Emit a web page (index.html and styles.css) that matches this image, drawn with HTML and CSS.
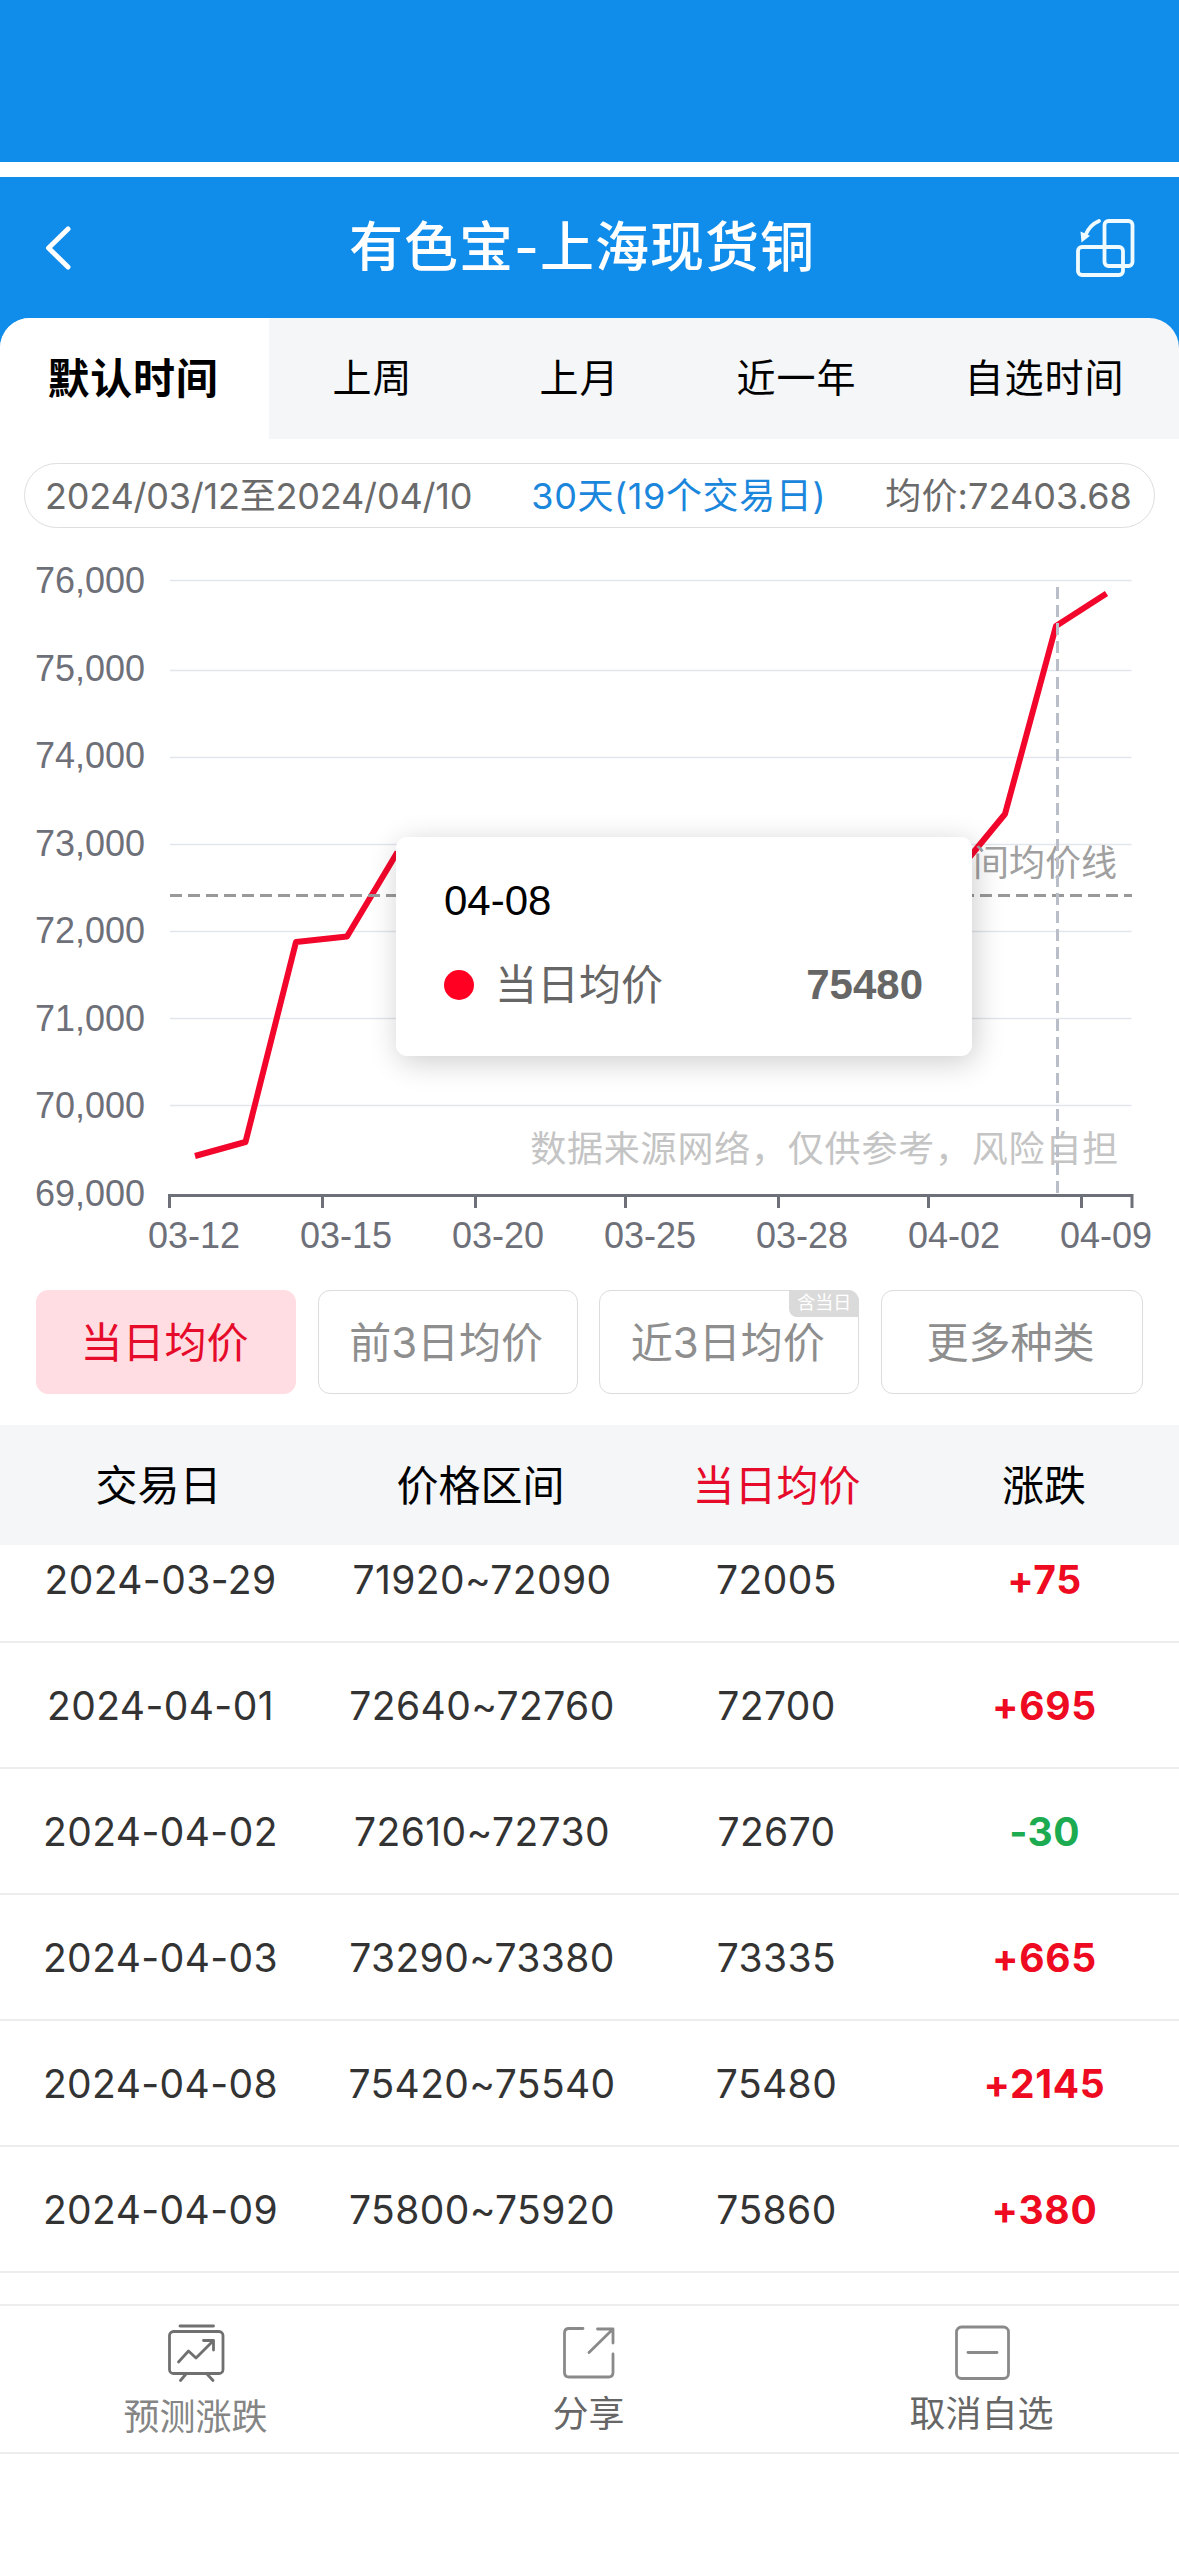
FILE: index.html
```html
<!DOCTYPE html>
<html lang="zh-CN">
<head>
  <meta charset="UTF-8">
  <title>有色宝-上海现货铜</title>
  <link rel="stylesheet" href="styles.css">
</head>
<body>

<div class="status-bar"></div>

<div class="top">
  <header class="navbar">
    <svg class="icon-back" viewBox="0 0 30 50" width="30" height="50">
      <path d="M25 6 L5.500 25 L25 44"/>
    </svg>
    <h1>有色宝-上海现货铜</h1>
    <svg class="icon-rotate" viewBox="0 0 60 60" width="60" height="60">
      <rect x="29.500" y="4" width="28" height="45" rx="4"/>
      <rect x="3" y="30" width="45" height="28" rx="4"/>
      <path d="M24 4 C18 6.500 13 12 10.500 18"/>
      <path class="head" d="M5.500 14.500 L15 18.800 L6.500 25.500 Z"/>
    </svg>
  </header>

  <nav class="tabs">
    <div class="tab active">默认时间</div>
    <div class="tab">上周</div>
    <div class="tab">上月</div>
    <div class="tab">近一年</div>
    <div class="tab">自选时间</div>
  </nav>
</div>

<div class="summary">
  <span class="range">2024/03/12至2024/04/10</span>
  <span class="days">30天(19个交易日)</span>
  <span class="avg">均价:72403.68</span>
</div>

<!-- 走势图 -->
<div class="chart">
  <svg viewBox="0 528 1179 742" width="1179" height="742">
    <g class="grid">
      <path d="M170 580.500H1131.500M170 670.500H1131.500M170 757.500H1131.500M170 844.500H1131.500M170 931.500H1131.500M170 1018.500H1131.500M170 1105.500H1131.500"/>
    </g>
    <g class="axis">
      <path d="M168 1195.500H1133M169.500 1194V1208M322.500 1194V1208M475.500 1194V1208M625.500 1194V1208M778.500 1194V1208M928.500 1194V1208M1081.500 1194V1208M1132 1194V1208"/>
    </g>
    <g class="label-y">
      <text x="145" y="593">76,000</text>
      <text x="145" y="681">75,000</text>
      <text x="145" y="768">74,000</text>
      <text x="145" y="856">73,000</text>
      <text x="145" y="943">72,000</text>
      <text x="145" y="1031">71,000</text>
      <text x="145" y="1118">70,000</text>
      <text x="145" y="1206">69,000</text>
    </g>
    <g class="label-x">
      <text x="194" y="1248">03-12</text>
      <text x="346" y="1248">03-15</text>
      <text x="498" y="1248">03-20</text>
      <text x="650" y="1248">03-25</text>
      <text x="802" y="1248">03-28</text>
      <text x="954" y="1248">04-02</text>
      <text x="1106" y="1248">04-09</text>
    </g>
    <polyline class="line" points="195,1156 245.500,1142 296,942 347,936.500 397.500,852"/>
    <polyline class="line" points="954,876 1005,814 1056,626 1106.500,593.500"/>
    <path class="avg-line" d="M170 895.500H1132"/>
    <text class="avg-text" x="1117" y="876">间均价线</text>
    <text class="source" x="1119" y="1162">数据来源网络，仅供参考，风险自担</text>
    <path class="pointer" d="M1057.500 587V1193"/>
  </svg>

  <div class="tooltip">
    <div class="tip-date">04-08</div>
    <div class="tip-row">
      <i class="dot"></i>
      <span>当日均价</span>
      <b>75480</b>
    </div>
  </div>
</div>

<div class="types">
  <div class="type active">当日均价</div>
  <div class="type">前3日均价</div>
  <div class="type">近3日均价<span class="badge">含当日</span></div>
  <div class="type">更多种类</div>
</div>

<!-- 价格列表 -->
<div class="row table-head">
  <div>交易日</div>
  <div>价格区间</div>
  <div class="current">当日均价</div>
  <div>涨跌</div>
</div>
<div class="table-body">
  <div class="row"><div>2024-03-29</div><div>71920~72090</div><div>72005</div><div class="up">+75</div></div>
  <div class="row"><div>2024-04-01</div><div>72640~72760</div><div>72700</div><div class="up">+695</div></div>
  <div class="row"><div>2024-04-02</div><div>72610~72730</div><div>72670</div><div class="down">-30</div></div>
  <div class="row"><div>2024-04-03</div><div>73290~73380</div><div>73335</div><div class="up">+665</div></div>
  <div class="row"><div>2024-04-08</div><div>75420~75540</div><div>75480</div><div class="up">+2145</div></div>
  <div class="row"><div>2024-04-09</div><div>75800~75920</div><div>75860</div><div class="up">+380</div></div>
</div>

<footer class="toolbar">
  <div class="tool forecast">
    <svg viewBox="0 0 60 60" width="60" height="60">
      <path d="M14 4H47.500"/>
      <rect x="3.500" y="9.500" width="53.500" height="42" rx="4"/>
      <path d="M20 52L14.500 58.500M41 52L47 58.500"/>
      <path d="M12.500 40L22.500 29L30 36L47 19M37.500 18.500H47.500V28"/>
    </svg>
    <span>预测涨跌</span>
  </div>
  <div class="tool share">
    <svg viewBox="0 0 60 60" width="60" height="60">
      <path d="M24 6.500H10Q5.500 6.500 5.500 11V50.500Q5.500 55 10 55H49.500Q54 55 54 50.500V32"/>
      <path d="M30 30.500L53.500 7.500M38.500 7H54V21"/>
    </svg>
    <span>分享</span>
  </div>
  <div class="tool remove">
    <svg viewBox="0 0 60 60" width="60" height="60">
      <rect x="4.500" y="5" width="52" height="51.500" rx="5"/>
      <path d="M16 30.500H45"/>
    </svg>
    <span>取消自选</span>
  </div>
</footer>

</body>
</html>
```
FILE: styles.css
```css
* {
  box-sizing: border-box;
}
body {
  margin: 0;
  background: #fff;
  color: #000;
  font-family: Inter, "Noto Sans CJK SC", sans-serif;
}
svg {
  display: block;
  fill: none;
}

/* 顶部 */
.status-bar {
  height: 162px;
  background: #108cea;
}
.top {
  margin-top: 15px;
  background: #108cea;
}
.navbar {
  display: flex;
  align-items: center;
  justify-content: space-between;
  height: 141px;
  padding: 0 44px 0 43px;
}
.navbar h1 {
  margin: 0 0 0 16px;
  color: #fff;
  font-size: 54px;
  font-weight: 500;
  letter-spacing: 1px;
  line-height: 80px;
}
.icon-back {
  stroke: #fff;
  stroke-width: 5;
  stroke-linecap: round;
  stroke-linejoin: round;
}
.icon-rotate {
  margin-bottom: 2px;
  stroke: #f0fbff;
  stroke-width: 3.800;
  stroke-linecap: round;
}
.icon-rotate .head {
  fill: #f0fbff;
  stroke: none;
}

/* 时间切换 */
.tabs {
  display: grid;
  grid-template-columns: 269px 207px 207px 227px 269px;
  height: 121px;
  border-radius: 30px 30px 0 0;
  overflow: hidden;
  background: #f4f6f8;
}
.tab {
  display: flex;
  align-items: center;
  justify-content: center;
  padding-bottom: 7px;
  font-size: 39px;
  letter-spacing: 1px;
}
.tab.active {
  padding-right: 3px;
  background: #fff;
  font-size: 42px;
  font-weight: 700;
  letter-spacing: 0.7px;
}

.summary {
  display: flex;
  align-items: center;
  justify-content: space-between;
  height: 65px;
  margin: 24px 24px 0;
  padding: 0 22px 5px 20px;
  border: 1px solid #dedede;
  border-radius: 33px;
  color: #6a6a6a;
  font-size: 36px;
  white-space: nowrap;
}
.summary .range {
  letter-spacing: -0.2px;
}
.summary .days {
  color: #1a86dc;
  letter-spacing: 0.6px;
}
.summary .avg {
  letter-spacing: 0.1px;
}

/* 图表 */
.chart {
  position: relative;
  height: 742px;
}
.grid {
  stroke: #e3e5ec;
  stroke-width: 1.500;
}
.axis {
  stroke: #6e7079;
  stroke-width: 3;
}
.label-y,
.label-x {
  fill: #6e7079;
  font: 36px "Liberation Sans", sans-serif;
}
.label-y {
  text-anchor: end;
}
.label-x {
  text-anchor: middle;
}
.line {
  stroke: #f3062b;
  stroke-width: 6;
  stroke-linejoin: round;
}
.avg-line {
  stroke: #999;
  stroke-width: 3;
  stroke-dasharray: 12 6;
}
.avg-text,
.source {
  font-family: "Noto Sans CJK SC", sans-serif;
  font-size: 36px;
  text-anchor: end;
}
.avg-text {
  fill: #a0a0a0;
}
.source {
  fill: #c4c4c4;
  letter-spacing: 0.8px;
}
.pointer {
  stroke: #b9bec9;
  stroke-width: 3;
  stroke-dasharray: 12 6;
}
.tooltip {
  position: absolute;
  left: 396px;
  top: 309px;
  width: 576px;
  height: 219px;
  padding: 40px 49px 0 48px;
  border-radius: 11px;
  background: #fff;
  box-shadow: 3px 6px 30px rgba(0, 0, 0, 0.2);
  font-family: "Liberation Sans", "Noto Sans CJK SC", sans-serif;
  font-size: 42px;
}
.tip-date {
  line-height: 48px;
}
.tip-row {
  display: flex;
  align-items: center;
  height: 60px;
  margin-top: 30px;
  color: #666;
}
.tip-row span {
  padding-bottom: 7px;
}
.tip-row b {
  margin-left: auto;
}
.dot {
  width: 30px;
  height: 30px;
  margin-right: 21px;
  border-radius: 50%;
  background: #ff0022;
}

/* 均价类型 */
.types {
  display: grid;
  grid-template-columns: 260px 260px 260px 262px;
  justify-content: space-between;
  height: 155px;
  padding: 20px 36px 31px;
}
.type {
  position: relative;
  display: flex;
  align-items: center;
  justify-content: center;
  padding: 0 3px 5px 0;
  border: 1px solid #dcdcdc;
  border-radius: 12px;
  color: #8e8e8e;
  font-size: 42px;
}
.type.active {
  border-color: #ffdde2;
  background: #ffdde2;
  color: #e60b2a;
}
.badge {
  position: absolute;
  top: -1px;
  right: -1px;
  width: 70px;
  height: 27px;
  border-radius: 0 11px 0 8px;
  background: #dadada;
  color: #fff;
  font-size: 18px;
  line-height: 26px;
  text-align: center;
}

/* 列表 */
.row {
  display: grid;
  grid-template-columns: 321px 322px 267px 269px;
  align-items: center;
  height: 126px;
  border-bottom: 2px solid #ededed;
  color: #333;
  font-size: 39px;
  letter-spacing: 0.4px;
  text-align: center;
}
.row.table-head {
  grid-template-columns: 317px 327px 265px 270px;
  height: 120px;
  padding-bottom: 6px;
  border: 0;
  background: #f4f6f8;
  color: #000;
  font-size: 42px;
  letter-spacing: 0;
}
.row .current {
  color: #e60b2a;
}
.table-body {
  height: 759px;
  overflow: hidden;
}
.table-body .row:first-child {
  margin-top: -28px;
}
.up {
  color: #ee0a20;
  font-weight: 700;
  letter-spacing: 0.7px;
}
.down {
  color: #1cab50;
  font-weight: 700;
}

/* 底部工具栏 */
.toolbar {
  display: grid;
  grid-template-columns: 1fr 1fr 1fr;
  height: 150px;
  border-top: 2px solid #ededed;
  border-bottom: 2px solid #ededed;
}
.tool {
  display: flex;
  flex-direction: column;
  align-items: center;
  padding: 16px 2px 0 0;
  color: #666;
  font-size: 36px;
  line-height: 52px;
}
.tool svg {
  stroke: #8a8a8a;
  stroke-width: 2.800;
  stroke-linecap: round;
  stroke-linejoin: round;
}
.tool span {
  margin-top: 6px;
}
.forecast {
  color: #858585;
}
.forecast svg {
  stroke: #707070;
}
.forecast span {
  margin-top: 9px;
}
```
